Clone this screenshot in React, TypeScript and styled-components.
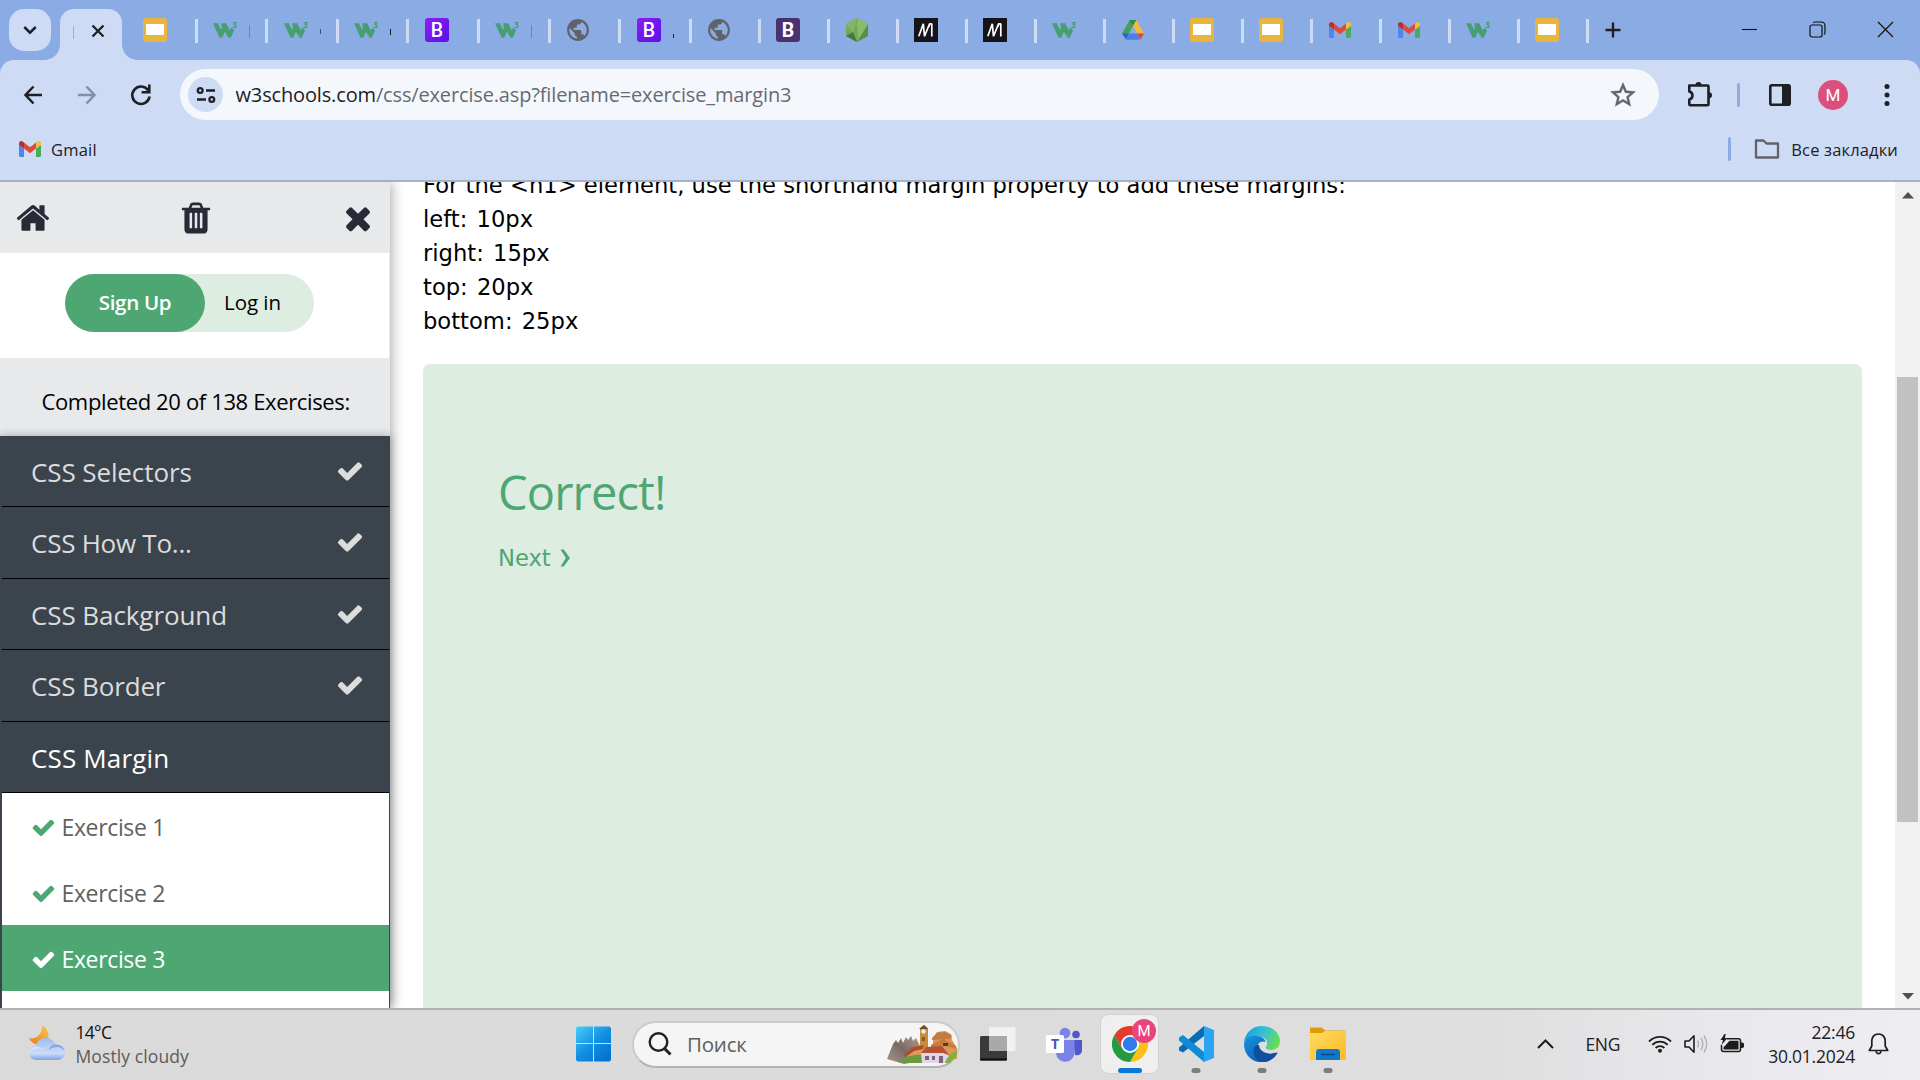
import React from "react";
import styled, { createGlobalStyle } from "styled-components";
import { MdPublic } from "react-icons/md";

const ui = `"Open Sans", "Noto Sans", sans-serif`;
const verdana = `"DejaVu Sans", Verdana, sans-serif`;
const green = "#4ea773";
const paleGreen = "#ddede1";
const slate = "#3b444c";
const frame = "#8babe5";
const chromeBg = "#cddbf5";

const Global = createGlobalStyle`
  * { box-sizing: border-box; }
  html, body { margin: 0; padding: 0; background: #fff; overflow: hidden; }
  svg { display: block; flex: none; }
`;

const Screen = styled.div`
  width: 1920px;
  height: 1080px;
  display: flex;
  flex-direction: column;
  overflow: hidden;
  font-family: ${ui};
  color: #1f2024;
`;

const Label = styled.span<{ $size: number; $track?: number; $color?: string; $weight?: number }>`
  font-size: ${(p) => p.$size}px;
  letter-spacing: ${(p) => p.$track ?? 0}px;
  color: ${(p) => p.$color ?? "inherit"};
  font-weight: ${(p) => p.$weight ?? 400};
  white-space: nowrap;
`;

/* ---------- browser frame ---------- */

const TabStrip = styled.div`
  height: 60px;
  flex: none;
  display: flex;
  align-items: flex-start;
  padding-left: 9px;
  background: ${frame};
`;

const TabSearch = styled.div`
  width: 42px;
  height: 42px;
  margin: 9px 9px 0 0;
  border-radius: 15px;
  background: ${chromeBg};
  display: flex;
  align-items: center;
  justify-content: center;
`;

const ActiveTab = styled.div`
  position: relative;
  width: 62px;
  height: 51px;
  margin: 9px 5px 0 0;
  border-radius: 14px 14px 0 0;
  background: ${chromeBg};
  display: flex;
  align-items: center;
  padding: 0 0 8px 13px;
  gap: 16.5px;
  &::before,
  &::after {
    content: "";
    position: absolute;
    bottom: 0;
    width: 15px;
    height: 15px;
  }
  &::before {
    left: -15px;
    background: radial-gradient(circle at 0 0, transparent 14.5px, ${chromeBg} 15px);
  }
  &::after {
    right: -15px;
    background: radial-gradient(circle at 100% 0, transparent 14.5px, ${chromeBg} 15px);
  }
`;

const Tab = styled.div<{ $w: number }>`
  width: ${(p) => p.$w}px;
  height: 24px;
  flex: none;
  margin-top: 19px;
  padding-left: 15.5px;
  border-right: 3px solid ${chromeBg};
  display: flex;
  gap: 12px;
  svg {
    margin-top: -1px;
  }
`;

const TitleSliver = styled.i<{ $h: number; $top: number; $c: string }>`
  width: 1px;
  height: ${(p) => p.$h}px;
  margin-top: ${(p) => p.$top}px;
  background: ${(p) => p.$c};
`;

const NewTab = styled.div`
  margin: 22px 0 0 16px;
`;

const WindowButtons = styled.div`
  margin-left: auto;
  padding: 21px 26.5px 0 0;
  display: flex;
  gap: 51px;
`;

const Chrome = styled.div`
  flex: none;
  height: 122px;
  background: linear-gradient(${frame}, ${frame}) top / 100% 16px no-repeat ${chromeBg};
  border-bottom: 2px solid #a3b1cd;
`;

const Toolbar = styled.div`
  height: 69px;
  display: flex;
  align-items: center;
  padding-left: 21px;
  border-radius: 14px 14px 0 0;
  background: ${chromeBg};
`;

const NavButtons = styled.div`
  display: flex;
  gap: 30px;
  width: 159px;
`;

const Omnibox = styled.div`
  width: 1479px;
  height: 51px;
  border-radius: 26px;
  background: #f4f8fd;
  display: flex;
  align-items: center;
  padding: 0 21px 0 8px;
  margin-right: 28px;
`;

const SiteInfo = styled.div`
  width: 35px;
  height: 35px;
  border-radius: 50%;
  background: ${chromeBg};
  margin-right: 12.5px;
  display: flex;
  align-items: center;
  justify-content: center;
`;

const Url = styled(Label)`
  flex: 1;
  b {
    font-weight: 400;
    color: #1f2024;
  }
`;

const Divider = styled.div`
  width: 3px;
  height: 24px;
  border-radius: 2px;
  background: ${frame};
`;

const ToolbarActions = styled.div`
  display: flex;
  align-items: center;
  ${Divider} {
    margin: 0 28.5px 0 24px;
  }
`;

const Avatar = styled.div<{ $d: number; $bg: string; $fs: number }>`
  width: ${(p) => p.$d}px;
  height: ${(p) => p.$d}px;
  border-radius: 50%;
  background: ${(p) => p.$bg};
  color: #fff;
  font: 400 ${(p) => p.$fs}px Roboto, sans-serif;
  display: flex;
  align-items: center;
  justify-content: center;
`;

const ProfileSlot = styled.div`
  margin: 0 36px 0 27.5px;
`;

const Bookmarks = styled.div`
  height: 51px;
  display: flex;
  align-items: center;
  padding: 0 22px 11px 18px;
`;

const BookmarkLink = styled.div`
  display: flex;
  align-items: center;
  gap: 9px;
`;

const AllBookmarks = styled.div`
  margin-left: auto;
  display: flex;
  align-items: center;
  ${Divider} {
    margin-right: 23px;
  }
  svg {
    margin-right: 11px;
  }
`;

/* ---------- page ---------- */

const Page = styled.div`
  flex: 1;
  min-height: 0;
  display: flex;
  background: #fff;
`;

const Sidebar = styled.aside`
  width: 390px;
  flex: none;
  display: flex;
  flex-direction: column;
  background: #e7e9eb;
  box-shadow: 2px 0 12px rgba(0, 0, 0, 0.32);
  clip-path: inset(0 -20px 0 0);
  z-index: 1;
`;

const SideHeader = styled.div`
  height: 71px;
  flex: none;
  display: flex;
  align-items: center;
  justify-content: space-between;
  padding: 0 14px 0 15px;
  background: #e7e9eb;
`;

const Account = styled.div`
  height: 105px;
  flex: none;
  margin-right: 1px;
  padding: 21px 0 0 65px;
  background: #fff;
`;

const Pill = styled.div`
  width: 249px;
  height: 58px;
  border-radius: 29px;
  background: ${paleGreen};
  display: flex;
`;

const SignUp = styled.div`
  width: 140px;
  height: 58px;
  border-radius: 29px;
  background: ${green};
  display: flex;
  align-items: center;
  justify-content: center;
  padding-bottom: 2px;
`;

const LogIn = styled.div`
  display: flex;
  align-items: center;
  padding: 0 0 2px 19px;
  color: #000;
`;

const Progress = styled.div`
  height: 78px;
  flex: none;
  display: flex;
  align-items: center;
  padding: 7px 0 0 41.5px;
  color: #000;
`;

const SideBottom = styled.div`
  flex: 1;
  min-height: 0;
  display: flex;
  flex-direction: column;
  box-shadow: 0 0 9px rgba(0, 0, 0, 0.3);
`;

const Menu = styled.div`
  flex: 1;
  min-height: 0;
  overflow: hidden;
  display: flex;
  flex-direction: column;
  background: ${slate};
  padding: 0 1px 0 2px;
`;

const MenuItem = styled.div<{ $h: number }>`
  height: ${(p) => p.$h}px;
  flex: none;
  border-bottom: 1px solid #000;
  display: flex;
  align-items: center;
  justify-content: space-between;
  padding: 1px 25.5px 0 29px;
  svg {
    margin-bottom: 2px;
  }
`;

const Exercise = styled.div<{ $on?: boolean }>`
  height: 66px;
  flex: none;
  background: ${(p) => (p.$on ? green : "#fff")};
  color: ${(p) => (p.$on ? "#fff" : "#616161")};
  display: flex;
  align-items: center;
  gap: 5.5px;
  padding: 2px 0 0 29px;
  svg {
    color: ${(p) => (p.$on ? "#fff" : green)};
  }
`;

const MenuRest = styled.div`
  flex: 1;
  background: #fff;
`;

const Main = styled.main`
  flex: 1;
  display: flex;
  flex-direction: column;
  overflow: hidden;
  padding: 0 33px;
`;

const Task = styled.p`
  margin: -14px 0 26px;
  font: 22.65px/34px ${verdana};
  color: #000;
  white-space: nowrap;
`;

const Values = styled.span`
  word-spacing: 2px;
`;

const Result = styled.section`
  flex: 1;
  border-radius: 7px 7px 0 0;
  background: ${paleGreen};
  padding: 98px 0 0 75px;
  color: ${green};
`;

const ResultTitle = styled.h2`
  margin: 0 0 19px;
  font: 400 47px/60px ${ui};
  letter-spacing: -0.85px;
`;

const NextLink = styled.a`
  display: flex;
  align-items: center;
  gap: 9px;
  height: 34px;
  font: 22.7px/34px ${verdana};
  letter-spacing: -0.05px;
`;

const Scrollbar = styled.div`
  width: 25px;
  flex: none;
  background: #f1f1f1;
  padding: 10px 0 8px;
  display: flex;
  flex-direction: column;
  align-items: center;
  justify-content: space-between;
`;

const Track = styled.div`
  width: 21px;
  flex: 1;
  margin-top: 178px;
`;

const Thumb = styled.div`
  height: 445px;
  background: #c1c1c1;
`;

/* ---------- taskbar ---------- */

const Taskbar = styled.footer`
  height: 72px;
  flex: none;
  border-top: 2px solid #b1b1b2;
  background: linear-gradient(90deg, #dadada, #dcdcdc 55%, #dfdfe0 78%, #e9e9ed 90%, #ededf2);
  display: grid;
  grid-template-columns: 575px 820px 1fr;
  align-items: center;
  padding-bottom: 2px;
`;

const Weather = styled.div`
  display: flex;
  align-items: center;
  padding-left: 27px;
  gap: 8.5px;
`;

const Lines = styled.div<{ $right?: boolean }>`
  display: flex;
  flex-direction: column;
  line-height: 24px;
  align-items: ${(p) => (p.$right ? "flex-end" : "flex-start")};
  padding-bottom: 1px;
`;

const Dock = styled.div`
  display: flex;
  align-items: center;
  height: 68px;
`;

const Search = styled.div`
  width: 328px;
  height: 47px;
  margin: 0 9px 0 20px;
  border-radius: 24px;
  background: #f5f5f5;
  border: 2px solid #cbcbcb;
  border-bottom-color: #b3b3b3;
  display: flex;
  align-items: center;
  padding: 0 0 0 14px;
  svg:last-child {
    margin-left: auto;
  }
  ${Label} {
    margin-left: 15px;
  }
`;

const DockApp = styled.div<{ $active?: boolean }>`
  position: relative;
  width: 57px;
  height: 58px;
  margin-right: 9px;
  border-radius: 7px;
  background: ${(p) => (p.$active ? "#efefef" : "transparent")};
  box-shadow: ${(p) => (p.$active ? "0 0 0 1px #d2d2d2" : "none")};
  display: flex;
  align-items: center;
  justify-content: center;
`;

const Running = styled.i<{ $active?: boolean }>`
  position: absolute;
  bottom: 0;
  left: 50%;
  transform: translateX(-50%);
  width: ${(p) => (p.$active ? 24 : 9)}px;
  height: 5px;
  border-radius: 3px;
  background: ${(p) => (p.$active ? "#0b7ad6" : "#7d7d7d")};
`;

const Badge = styled.div`
  position: absolute;
  top: 4px;
  right: 2px;
`;

const Tray = styled.div`
  display: flex;
  align-items: center;
  justify-content: flex-end;
  padding-right: 31px;
`;

const TrayIcons = styled.div`
  display: flex;
  gap: 12px;
  margin: 0 24px 0 28px;
`;

const Lang = styled.div`
  margin-left: 31.5px;
`;

const Bell = styled.div`
  margin-left: 13px;
`;

/* ---------- favicons ---------- */

const W3 = () => (
  <svg width="24" height="24" viewBox="0 0 24 24">
    <path d="M0 5.300h4.800l3.200 6.500 1-1.900-.8-4.600h5l3.600 7.300 1.300-3.200 3 3-3.400 7.300h-2.200l-3.600-6-2.800 6H6.600z" fill="#459f70" />
    <path d="M19.800 4.600h3l-1.600 2.100c2.300.1 2.300 3 .3 3-.9 0-1.500-.3-1.800-1" fill="none" stroke="#459f70" strokeWidth="1.300" />
  </svg>
);

const Slides = () => (
  <svg width="24" height="24" viewBox="0 0 24 24">
    <rect width="24" height="24" rx="3" fill="#e8b63f" />
    <rect x="3" y="6" width="18" height="11" fill="#fff" />
  </svg>
);

const Bootstrap = ({ dark }: { dark?: boolean }) => (
  <svg width="24" height="24" viewBox="0 0 24 24">
    <defs>
      <linearGradient id="bs" x1="0" y1="0" x2="1" y2="1">
        <stop offset="0" stopColor="#8e1cf5" />
        <stop offset="1" stopColor="#5a10ea" />
      </linearGradient>
    </defs>
    <rect width="24" height="24" rx="3" fill={dark ? "#4b326f" : "url(#bs)"} />
    <text x="12" y="18.800" textAnchor="middle" fontFamily="Roboto, sans-serif" fontSize="19.500" fontWeight={dark ? 700 : 500} fill="#fff">
      B
    </text>
  </svg>
);

const Globe = () => <MdPublic size={24} viewBox="1 1 22 22" color="#5f6368" />;

const Node = () => (
  <svg width="24" height="24" viewBox="0 0 24 24">
    <path d="M12 0l11 6v12l-11 6L1 18V6z" fill="#76a85b" />
    <path d="M12 0l11 6-10 18z" fill="#8abb68" />
    <path d="M12 0L8 15 1 6z" fill="#83b566" />
    <path d="M8 14l4 10-11-6z" fill="#3f7b3d" />
    <path d="M23 6v12l-11 6z" fill="#578f4b" />
  </svg>
);

const Mdn = () => (
  <svg width="24" height="24" viewBox="0 0 24 24">
    <path d="M0 0h24v24H0z" fill="#15141a" />
    <path d="M4.800 18.300L9.300 5.800l1.200 12.500L15.600 5.800M17.800 5.500v13M15.600 5.800l-.6 3M15.200 5.800h2.600" fill="none" stroke="#fff" strokeWidth="1.700" />
  </svg>
);

const Drive = () => (
  <svg width="24" height="24" viewBox="0 0 24 24">
    <path d="M8.600 2h6.800L5 20.500 1 15.500z" fill="#43a05a" />
    <path d="M8.600 2h6.800L12 8z" fill="#2e8b46" />
    <path d="M15.400 2L23 15.500h-6.800L12 8z" fill="#f5b93a" />
    <path d="M1 15.500h7L5 21.500z" fill="#3063c9" />
    <path d="M8 15.500h8.200l3 6.300H5z" fill="#4a80ec" />
    <path d="M16.200 15.500H23l-3.600 6z" fill="#e0483b" />
  </svg>
);

const Gmail = () => (
  <svg width="24" height="24" viewBox="0 0 24 24">
    <path d="M1 8l5 3.500V20H2.500Q1 20 1 18.500z" fill="#4f86ec" />
    <path d="M23 8l-5 3.500V20h3.500q1.500 0 1.500-1.500z" fill="#4caa5b" />
    <path d="M6 5.500l6 4.800 6-4.800v6l-6 4.800-6-4.800z" fill="#dd4b3e" />
    <path d="M1 6.500C1 4.200 3.400 3.400 5 4.700l1 .8v6L1 8z" fill="#b8322c" />
    <path d="M23 6.500c0-2.300-2.400-3.100-4-1.800l-1 .8v6L23 8z" fill="#f3bf3d" />
  </svg>
);

type TabInfo = { icon: React.FC; sliver?: [number, number, string] };
const BsDark = () => <Bootstrap dark />;
const wideTabs: TabInfo[] = [
  { icon: Slides },
  { icon: W3, sliver: [13, 6, "#6c84b3"] },
  { icon: W3, sliver: [5, 10, "#41507a"] },
  { icon: W3, sliver: [6, 10, "#1f2024"] },
  { icon: Bootstrap },
  { icon: W3, sliver: [13, 6, "#6c84b3"] },
  { icon: Globe },
  { icon: Bootstrap, sliver: [4, 15, "#1f2024"] },
];
const narrowTabs: TabInfo[] = [Globe, BsDark, Node, Mdn, Mdn, W3, Drive, Slides, Slides, Gmail, Gmail, W3, Slides].map((icon) => ({ icon }));

/* ---------- Font Awesome 4 glyphs ---------- */

const glyphs = {
  home: "M1472 992v480q0 26-19 45t-45 19h-384v-384h-256v384h-384q-26 0-45-19t-19-45v-480q0-1 .5-3t.5-3l575-474 575 474q1 2 1 6zm223-69l-62 74q-8 9-21 11h-3q-13 0-21-7l-692-577-692 577q-12 8-24 7-13-2-21-11l-62-74q-8-10-7-23.500t11-21.500l719-599q32-26 76-26t76 26l244 204v-195q0-14 9-23t23-9h192q14 0 23 9t9 23v408l219 182q10 8 11 21.500t-7 23.500z",
  trash:
    "M704 1376v-704q0-14-9-23t-23-9h-64q-14 0-23 9t-9 23v704q0 14 9 23t23 9h64q14 0 23-9t9-23zm256 0v-704q0-14-9-23t-23-9h-64q-14 0-23 9t-9 23v704q0 14 9 23t23 9h64q14 0 23-9t9-23zm256 0v-704q0-14-9-23t-23-9h-64q-14 0-23 9t-9 23v704q0 14 9 23t23 9h64q14 0 23-9t9-23zm-544-992h448l-48-117q-7-9-17-11h-317q-10 2-17 11zm928 32v64q0 14-9 23t-23 9h-96v948q0 83-47 143.500t-113 60.500h-832q-66 0-113-58.500t-47-141.500v-952h-96q-14 0-23-9t-9-23v-64q0-14 9-23t23-9h309l70-167q15-37 54-63t79-26h320q40 0 79 26t54 63l70 167h309q14 0 23 9t9 23z",
  times:
    "M1490 1322q0 40-28 68l-136 136q-28 28-68 28t-68-28l-294-294-294 294q-28 28-68 28t-68-28l-136-136q-28-28-28-68t28-68l294-294-294-294q-28-28-28-68t28-68l136-136q28-28 68-28t68 28l294 294 294-294q28-28 68-28t68 28l136 136q28 28 28 68t-28 68l-294 294 294 294q28 28 28 68z",
  check:
    "M1671 566q0 40-28 68l-724 724-136 136q-28 28-68 28t-68-28l-136-136-362-362q-28-28-28-68t28-68l136-136q28-28 68-28t68 28l294 295 656-657q28-28 68-28t68 28l136 136q28 28 28 68z",
};

const Glyph = ({ name, size, color = "currentColor" }: { name: keyof typeof glyphs; size: number; color?: string }) => (
  <svg width={size} height={size} viewBox="0 0 1792 1792">
    <path d={glyphs[name]} fill={color} />
  </svg>
);

/* ---------- taskbar artwork ---------- */

const CloudMoon = () => (
  <svg width="40" height="40" viewBox="0 0 40 40">
    <defs>
      <linearGradient id="cl" x1="0" y1="0" x2="0" y2="1">
        <stop offset="0" stopColor="#9bbcf3" />
        <stop offset="0.700" stopColor="#cbdcf8" />
        <stop offset="1" stopColor="#7fa3ea" />
      </linearGradient>
      <linearGradient id="mn" x1="1" y1="0" x2="0" y2="1">
        <stop offset="0" stopColor="#f7c54b" />
        <stop offset="1" stopColor="#ee7d1a" />
      </linearGradient>
    </defs>
    <path d="M15 1.500c8 4 9 14 2 18-6 3-12 0-15-5 8 1 14-5 13-13z" fill="url(#mn)" />
    <path d="M9 36a7 7 0 0 1 0-14c1-6 6-8 10-8 5 0 8 3 9.500 6.500 6 0 9.500 3 9.500 7.700 0 4.500-3.500 7.800-8 7.800z" fill="url(#cl)" />
    <path d="M22 26c1-4 4-5.500 7-5.500 5 0 8.500 3 8.500 7.500-1-3-4-5-8-5-3 0-5 1-7.500 3z" fill="#6f96df" opacity=".7" />
    <path d="M3 27c1-4 7-6 13-2-4-1-9-1-13 2z" fill="#e6effc" opacity=".7" />
  </svg>
);

const WindowsLogo = () => (
  <svg width="37" height="36" viewBox="0 0 37 36">
    <defs>
      <linearGradient id="win" gradientUnits="userSpaceOnUse" x1="0" y1="0" x2="30" y2="34">
        <stop offset="0" stopColor="#4fd0fc" />
        <stop offset="0.550" stopColor="#1291e2" />
        <stop offset="1" stopColor="#0574d0" />
      </linearGradient>
    </defs>
    <path d="M2.500 0.500H18V17H1V2zM19 .5H34.500L36 2V17H19zM1 18H18V35.500H2.500L1 34zM19 18H36V34L34.500 35.500H19z" fill="url(#win)" />
  </svg>
);

const Village = () => (
  <svg width="71" height="39" viewBox="0 0 71 39">
    <defs>
      <linearGradient id="rock" x1="1" y1="0" x2="0" y2="1">
        <stop offset="0" stopColor="#b39a8c" />
        <stop offset="0.500" stopColor="#7b6b63" />
        <stop offset="1" stopColor="#a49a90" />
      </linearGradient>
    </defs>
    <path d="M0 34l6-15 3-4 2 3 3-5 2 5 3-6 2 3 3-4 2 5 3-3 4 8v15l-16 3z" fill="url(#rock)" />
    <path d="M46 13l4-6 8-1 6 3 1 6 5 8v11H46z" fill="#dc9656" />
    <path d="M45 13l5-5 8-1 7 4-2 3-18 1z" fill="#c47b40" />
    <path d="M44 20l12-6 13 7v3l-13-4-12 6z" fill="#c97a3d" />
    <path d="M33 3l4-3 4 3v25h-8z" fill="#c98c3c" />
    <path d="M32 4l5-4 4 4z" fill="#7c4a25" />
    <circle cx="36.500" cy="6.500" r="2.200" fill="#e8eef6" />
    <path d="M35 12h3v4h-3z" fill="#8a5a28" />
    <path d="M19 30l9-8 9-2v12l-15 3z" fill="#d89b5c" />
    <path d="M17 30l9-8 11-2-1 4-9 2-8 6z" fill="#b04c2a" />
    <path d="M12 37c6-6 16-8 24-7v8H14z" fill="#6d9a3e" />
    <path d="M34 28h24l4 3v7H35z" fill="#dcd8ea" />
    <path d="M34 28l5-6 16-1 7 9-6-2H34z" fill="#b9502f" />
    <path d="M38 31h4v4h-4zM45 31h3v4h-3zM52 31h4v7h-4z" fill="#80607f" />
    <path d="M56 18h5v3h-5z" fill="#5e3a2e" />
    <path d="M58 38c2-7 7-9 12-13 0 7-4 11-8 13z" fill="#7fb040" />
  </svg>
);

const TaskView = () => (
  <svg width="36" height="36" viewBox="0 0 36 36">
    <rect x="0" y="10" width="27" height="24.500" rx="1.500" fill="#3a3a3a" />
    <path d="M0 32.500h27v1q0 1-1 1H1q-1 0-1-1z" fill="#0c0c0c" />
    <rect x="9" y="1" width="26.500" height="24" rx="1.500" fill="#f3f3f3" opacity=".9" />
    <rect x="9" y="10" width="18" height="15" fill="#a9a9a9" />
  </svg>
);

const Teams = () => (
  <svg width="36" height="36" viewBox="0 0 36 36">
    <circle cx="30" cy="8.500" r="3.800" fill="#5059c9" />
    <path d="M27 14h9v11q-1 5-7 4z" fill="#5059c9" />
    <circle cx="19" cy="7" r="5.300" fill="#7b83eb" />
    <path d="M10 14h18.500v12a9 9 0 0 1-18.500 1z" fill="#7b83eb" />
    <rect x="0" y="9" width="18" height="18" rx="1.500" fill="#fff" />
    <text x="9" y="23" textAnchor="middle" fontFamily="Open Sans, sans-serif" fontSize="14" fontWeight="700" fill="#4b53bc">
      T
    </text>
  </svg>
);

const ChromeLogo = () => (
  <svg width="36" height="36" viewBox="0 0 48 48">
    <path d="M24 12L44.800 12A24 24 0 0 1 24 48L34.400 30z" fill="#fbc116" />
    <path d="M24 24L34.400 30 24 48A24 24 0 0 1 3.200 12L13.600 30z" fill="#249a41" />
    <path d="M3.200 12A24 24 0 0 1 44.800 12H24L13.600 30z" fill="#e33b2e" />
    <circle cx="24" cy="24" r="12" fill="#fff" />
    <circle cx="24" cy="24" r="9.600" fill="#2d7df1" />
  </svg>
);

const VsCode = () => (
  <svg width="36" height="36" viewBox="0 0 36 36">
    <path d="M26 0v10L5 26.500 1 24.500v-3z" fill="#0a6db3" />
    <path d="M1 11.500l4-2.500 21 17v10L1 14.500z" fill="#0e8cd8" />
    <path d="M26 0l10 4v28l-10 4-1.500-1.500L26 33z" fill="#29a5f3" />
  </svg>
);

const Edge = () => (
  <svg width="36" height="36" viewBox="0 0 36 36">
    <defs>
      <linearGradient id="eg" x1="0" y1="0.300" x2="1" y2="0.600">
        <stop offset="0" stopColor="#1b9ede" />
        <stop offset="0.500" stopColor="#35c1d6" />
        <stop offset="1" stopColor="#6be04a" />
      </linearGradient>
      <linearGradient id="eb" x1="0" y1="0" x2="0.600" y2="1">
        <stop offset="0" stopColor="#1595e0" />
        <stop offset="1" stopColor="#0c63b8" />
      </linearGradient>
    </defs>
    <path d="M0 17C1 6 9 0 18 0c11 0 18 8 18 15 0 6-4 9-9 9-4 0-6-1.500-5-3 4-6-2-11-9-11C7 10 2 13 0 17z" fill="url(#eg)" />
    <path d="M0 18c1-6 7-9 13-8 5 0 8 3 8.500 6-5-2-9 2-8 8 1 5 5 9 10 11.500C10 39 0 30 0 18z" fill="url(#eb)" />
    <path d="M13 19c-6 3-4 13 3 16.500 7 2 14-2 17.500-8.500-1-1.500-5 2-11 0-5-1.500-7-4-7.500-8z" fill="#0f4f9e" />
  </svg>
);

const Explorer = () => (
  <svg width="36" height="34" viewBox="0 0 36 34">
    <defs>
      <linearGradient id="fx" x1="0" y1="0" x2="1" y2="1">
        <stop offset="0" stopColor="#ffdb5c" />
        <stop offset="1" stopColor="#fdb92a" />
      </linearGradient>
    </defs>
    <path d="M0 1.500Q0 .5 1 .5H12l3 3H35l1 1V12H0z" fill="#e09c07" />
    <path d="M0 6h12l3-2h21v28q0 1-1 1H1q-1 0-1-1z" fill="url(#fx)" />
    <path d="M6 33v-8q0-3 3-3h18q3 0 3 3v8z" fill="#0f78cc" />
    <path d="M11 27.500h14" stroke="#0a4b86" strokeWidth="1.500" />
  </svg>
);

const Ext = () => (
  <svg width="26" height="28" viewBox="0 0 26 28" fill="none" stroke="#1f2024" strokeWidth="2.600">
    <path d="M2.300 4.500H20.500Q21.500 4.500 21.500 5.500V23.200Q21.500 24.200 20.500 24.200H3.300Q2.300 24.200 2.300 23.200V18.500C6.500 17.500 6.500 11.500 2.300 10.500V4.500z" strokeLinejoin="round" />
    <path d="M8.500 4a3 3 0 0 1 6 0zM22 11.200a3 3 0 0 1 0 6z" fill="#1f2024" stroke="none" />
  </svg>
);

const Star = () => (
  <svg width="30" height="30" viewBox="0 0 24 24">
    <path
      d="M22 9.240l-7.190-.62L12 2 9.190 8.630 2 9.240l5.460 4.730L5.820 21 12 17.270 18.180 21l-1.630-7.030L22 9.240zM12 15.400l-3.760 2.270 1-4.280-3.320-2.880 4.380-.38L12 6.100l1.710 4.040 4.380.38-3.320 2.880 1 4.280L12 15.400z"
      fill="#5f6368"
      stroke="#5f6368"
      strokeWidth="0.300"
    />
  </svg>
);

const App = () => (
  <Screen>
    <Global />
    <TabStrip>
      <TabSearch>
        <svg width="14" height="14" viewBox="0 0 14 14" fill="none" stroke="#1f2024" strokeWidth="2.500">
          <path d="M1.300 4l5.700 5.700L12.700 4" />
        </svg>
      </TabSearch>
      <ActiveTab>
        <TitleSliver $h={13} $top={3} $c="#a3aec4" />
        <svg width="14" height="14" viewBox="0 0 14 14" fill="none" stroke="#1f2024" strokeWidth="2.300">
          <path d="M1.500 1.500l11 11M12.500 1.500l-11 11" />
        </svg>
      </ActiveTab>
      {wideTabs.map(({ icon: Icon, sliver }, i) => (
        <Tab key={i} $w={70.6}>
          <Icon />
          {sliver && <TitleSliver $h={sliver[0]} $top={sliver[1]} $c={sliver[2]} />}
        </Tab>
      ))}
      {narrowTabs.map(({ icon: Icon }, i) => (
        <Tab key={i} $w={69}>
          <Icon />
        </Tab>
      ))}
      <NewTab>
        <svg width="16" height="16" viewBox="0 0 16 16" stroke="#1f2024" strokeWidth="2.400">
          <path d="M8 .5v15M.5 8h15" />
        </svg>
      </NewTab>
      <WindowButtons>
        <svg width="17" height="17" viewBox="0 0 17 17" stroke="#111" strokeWidth="1.100">
          <path d="M1 8.500h15" />
        </svg>
        <svg width="17" height="17" viewBox="0 0 17 17" fill="none" stroke="#111" strokeWidth="1.200">
          <rect x="1" y="4" width="12" height="12" rx="2" />
          <path d="M4 1.600Q5 1 6 1h6q4 0 4 4v6q0 1.500-1 2.500" />
        </svg>
        <svg width="17" height="17" viewBox="0 0 17 17" stroke="#111" strokeWidth="1.200">
          <path d="M1 1l15 15M16 1L1 16" />
        </svg>
      </WindowButtons>
    </TabStrip>

    <Chrome>
      <Toolbar>
        <NavButtons>
          <svg width="24" height="24" viewBox="0 0 24 24" fill="none" stroke="#1f2024" strokeWidth="2.500">
            <path d="M21 12H5M12.500 3.500L4.500 12l8 8.500" />
          </svg>
          <svg width="24" height="24" viewBox="0 0 24 24" fill="none" stroke="#8590a8" strokeWidth="2.500">
            <path d="M3 12h16M11.500 3.500l8 8.500-8 8.500" />
          </svg>
          <svg width="24" height="24" viewBox="0 0 24 24" fill="none" stroke="#1f2024" strokeWidth="2.600">
            <path d="M19.300 7.500A8.700 8.700 0 1 0 20.600 13.500" />
            <path d="M20.300 1.500v7.700h-7.700" />
          </svg>
        </NavButtons>
        <Omnibox>
          <SiteInfo>
            <svg width="20" height="18" viewBox="0 0 20 18" fill="none" stroke="#1f2024" strokeWidth="2.300">
              <circle cx="4.200" cy="4.500" r="2.400" />
              <path d="M10 4.500h9M1 13.500h9" />
              <circle cx="15.800" cy="13.500" r="2.400" />
            </svg>
          </SiteInfo>
          <Url $size={20} $track={-0.15} $color="#676b70">
            <b>w3schools.com</b>/css/exercise.asp?filename=exercise_margin3
          </Url>
          <Star />
        </Omnibox>
        <ToolbarActions>
          <Ext />
          <Divider />
          <svg width="22" height="22" viewBox="0 0 22 22">
            <rect x="1.300" y="1.300" width="19.400" height="19.400" rx="1.500" fill="none" stroke="#1f2024" strokeWidth="2.600" />
            <path d="M13 1h8v20h-8z" fill="#1f2024" />
          </svg>
          <ProfileSlot>
            <Avatar $d={30} $bg="#db4f7c" $fs={17}>
              M
            </Avatar>
          </ProfileSlot>
          <svg width="6" height="26" viewBox="0 0 6 26" fill="#1f2024">
            <circle cx="3" cy="4.500" r="2.500" />
            <circle cx="3" cy="13" r="2.500" />
            <circle cx="3" cy="21.500" r="2.500" />
          </svg>
        </ToolbarActions>
      </Toolbar>
      <Bookmarks>
        <BookmarkLink>
          <Gmail />
          <Label $size={16.5} $track={0.2}>
            Gmail
          </Label>
        </BookmarkLink>
        <AllBookmarks>
          <Divider />
          <svg width="26" height="20" viewBox="0 0 26 20" fill="none" stroke="#606469" strokeWidth="2.300" strokeLinejoin="round">
            <path d="M2 1.500h7.500l3 3H24v14H2z" />
          </svg>
          <Label $size={16.5} $track={0.15}>
            Все закладки
          </Label>
        </AllBookmarks>
      </Bookmarks>
    </Chrome>

    <Page>
      <Sidebar>
        <SideHeader>
          <Glyph name="home" size={36} color="#282a35" />
          <Glyph name="trash" size={36} color="#282a35" />
          <Glyph name="times" size={36} color="#282a35" />
        </SideHeader>
        <Account>
          <Pill>
            <SignUp>
              <Label $size={20.5} $track={-0.3} $weight={600} $color="#fff">
                Sign Up
              </Label>
            </SignUp>
            <LogIn>
              <Label $size={20.5} $track={-0.05}>
                Log in
              </Label>
            </LogIn>
          </Pill>
        </Account>
        <Progress>
          <Label $size={22} $track={-0.36}>
            Completed 20 of 138 Exercises:
          </Label>
        </Progress>
        <SideBottom>
          <Menu>
            {(
              [
                ["CSS Selectors", 71, -0.1],
                ["CSS How To...", 72, -0.25],
                ["CSS Background", 71, -0.08],
                ["CSS Border", 72, -0.15],
              ] as [string, number, number][]
            ).map(([title, h, track]) => (
              <MenuItem key={title} $h={h}>
                <Label $size={26} $track={track} $color="#dcdcdc">
                  {title}
                </Label>
                <Glyph name="check" size={28} color="#dcdcdc" />
              </MenuItem>
            ))}
            <MenuItem $h={71}>
              <Label $size={26} $track={0.15} $color="#fff">
                CSS Margin
              </Label>
            </MenuItem>
            {[1, 2, 3].map((n) => (
              <Exercise key={n} $on={n === 3}>
                <Glyph name="check" size={25} />
                <Label $size={23} $track={-0.35}>
                  Exercise {n}
                </Label>
              </Exercise>
            ))}
            <MenuRest />
          </Menu>
        </SideBottom>
      </Sidebar>

      <Main>
        <Task>
          For the &lt;h1&gt; element, use the shorthand margin property to add these margins:
          <br />
          <Values>
            left: 10px
            <br />
            right: 15px
            <br />
            top: 20px
            <br />
            bottom: 25px
          </Values>
        </Task>
        <Result>
          <ResultTitle>Correct!</ResultTitle>
          <NextLink>
            Next
            <svg width="11" height="18" viewBox="0 0 11 18" fill={green}>
              <path d="M.5.500h3.300L10 9 3.800 17.500H.5L5.800 9z" />
            </svg>
          </NextLink>
        </Result>
      </Main>

      <Scrollbar>
        <svg width="12" height="7" viewBox="0 0 12 7">
          <path d="M6 0l6 6.500H0z" fill="#505050" />
        </svg>
        <Track>
          <Thumb />
        </Track>
        <svg width="12" height="7" viewBox="0 0 12 7">
          <path d="M0 0h12L6 6.500z" fill="#505050" />
        </svg>
      </Scrollbar>
    </Page>

    <Taskbar>
      <Weather>
        <CloudMoon />
        <Lines>
          <Label $size={17.5} $track={-0.7} $color="#111">
            14°C
          </Label>
          <Label $size={17.5} $track={0.1} $color="#5c5c5c">
            Mostly cloudy
          </Label>
        </Lines>
      </Weather>
      <Dock>
        <WindowsLogo />
        <Search>
          <svg width="24" height="24" viewBox="0 0 24 24" fill="none" stroke="#222" strokeWidth="2.400">
            <circle cx="10.500" cy="10" r="8.800" />
            <path d="M16.500 16.500l6 6" strokeWidth="3" />
          </svg>
          <Label $size={20.5} $track={-0.2} $color="#606060">
            Поиск
          </Label>
          <Village />
        </Search>
        <DockApp>
          <TaskView />
        </DockApp>
        <DockApp>
          <Teams />
        </DockApp>
        <DockApp $active>
          <ChromeLogo />
          <Badge>
            <Avatar $d={24} $bg="#e9457d" $fs={15}>
              M
            </Avatar>
          </Badge>
          <Running $active />
        </DockApp>
        <DockApp>
          <VsCode />
          <Running />
        </DockApp>
        <DockApp>
          <Edge />
          <Running />
        </DockApp>
        <DockApp>
          <Explorer />
          <Running />
        </DockApp>
      </Dock>
      <Tray>
        <svg width="17" height="10" viewBox="0 0 17 10" fill="none" stroke="#1c1c1c" strokeWidth="2">
          <path d="M1 9l7.500-7.500L16 9" />
        </svg>
        <Lang>
          <Label $size={17.5} $track={-0.25}>
            ENG
          </Label>
        </Lang>
        <TrayIcons>
          <svg width="24" height="20" viewBox="0 0 24 20" fill="none" stroke="#1c1c1c" strokeWidth="1.800">
            <path d="M1 7.500a15.500 15.500 0 0 1 22 0M4.300 10.800a11 11 0 0 1 15.400 0M7.600 14a6.300 6.300 0 0 1 8.800 0" />
            <circle cx="12" cy="16.800" r="2" fill="#1c1c1c" stroke="none" />
          </svg>
          <svg width="24" height="20" viewBox="0 0 24 20" fill="none" stroke="#1c1c1c" strokeWidth="1.600">
            <path d="M1 7h4l5-5.200v16.400L5 13H1z" strokeLinejoin="round" />
            <path d="M13.500 6.500q2 3.500 0 7M16.800 4q4 6 0 12M20 1.500q5.500 8.500 0 17" stroke="#b5b5b7" />
          </svg>
          <svg width="24" height="20" viewBox="0 0 24 20">
            <path d="M7 4.800H18.500Q20.500 4.800 20.500 6.800V15.500Q20.500 17.500 18.500 17.500H3.500Q1.500 17.500 1.500 15.500V11" fill="none" stroke="#1c1c1c" strokeWidth="1.500" />
            <path d="M3.500 15.500V13.500l6-6.700H18.500v8.700z" fill="#1c1c1c" />
            <path d="M21 8.500h1.500l1.500 1v3.500l-1.500 1H21z" fill="#1c1c1c" />
            <path d="M4.500 0L.5 6H3L1.500 11 7.500 4H4.800L5.800 0z" fill="#1c1c1c" />
          </svg>
        </TrayIcons>
        <Lines $right>
          <Label $size={17.5} $track={-0.2}>
            22:46
          </Label>
          <Label $size={17.5} $track={-0.25}>
            30.01.2024
          </Label>
        </Lines>
        <Bell>
          <svg width="21" height="22" viewBox="0 0 21 22" fill="none" stroke="#1c1c1c" strokeWidth="1.700" strokeLinejoin="round">
            <path d="M10.500 1C6 1 3.800 4.300 3.800 8v5L1.300 17.500h18.400L17.200 13V8c0-3.700-2.200-7-6.700-7zM7.800 18.500q2.700 4.500 5.400 0" />
          </svg>
        </Bell>
      </Tray>
    </Taskbar>
  </Screen>
);

export default App;
